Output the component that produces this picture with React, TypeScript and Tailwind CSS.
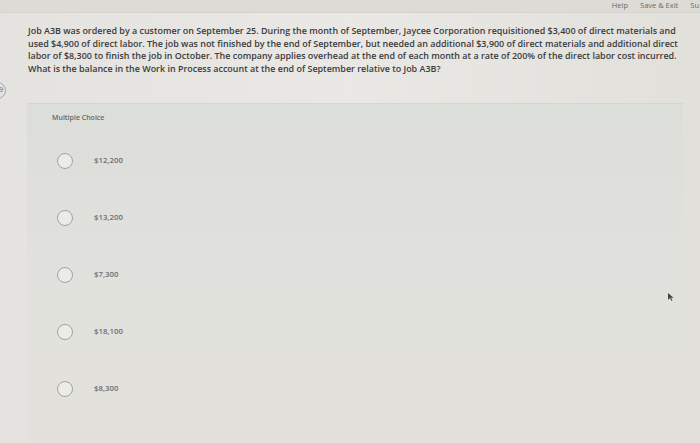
import React from "react";

const options = ["$12,200", "$13,200", "$7,300", "$18,100", "$8,300"];

const question = [
  "Job A3B was ordered by a customer on September 25. During the month of September, Jaycee Corporation requisitioned $3,400 of direct materials and",
  "used $4,900 of direct labor. The job was not finished by the end of September, but needed an additional $3,900 of direct materials and additional direct",
  "labor of $8,300 to finish the job in October. The company applies overhead at the end of each month at a rate of 200% of the direct labor cost incurred.",
  "What is the balance in the Work in Process account at the end of September relative to Job A3B?",
];

export default function App() {
  return (
    <div
      className="relative w-[700px] h-[443px] overflow-hidden bg-gradient-to-r from-[#e4e3df] via-[#e9e8e4] to-[#e2e0db] text-[#3b3b3b]"
      style={{ fontFamily: '"Open Sans", "Liberation Sans", sans-serif' }}
    >
      {/* top bar */}
      <div className="h-[13px] bg-[#dddbd6] border-b border-[#d4d2cd] flex items-start justify-end gap-[12px] pr-[1px] pt-[1px] text-[7.5px] leading-[9px] text-[#6a6a6a]">
        <span>Help</span>
        <span>Save &amp; Exit</span>
        <span>Su</span>
      </div>

      {/* question */}
      <div className="pl-[28px] pt-[12px] text-[8.95px] leading-[12.5px] font-semibold">
        {question.map((line) => (
          <div key={line} className="whitespace-nowrap">
            {line}
          </div>
        ))}
      </div>

      {/* question number badge, cut off at the left edge */}
      <div className="absolute left-[-11px] top-[82px] w-[17px] h-[17px] rounded-full border border-[#a9a7a2] flex items-center justify-end pr-[2px] text-[7px] text-[#666]">
        9
      </div>

      {/* answer panel */}
      <div className="ml-[27px] mt-[28px] w-[656px] h-[342px] bg-gradient-to-b from-[#dcdeda] via-[#e1e1dd] to-[#e3e1dc] border-t border-[#d5d6d2]">
        <div className="pl-[25px] pt-[9px] text-[7px] text-[#666] font-semibold">Multiple Choice</div>
        <div className="flex flex-col gap-[41px] pt-[29px] pl-[30px]">
          {options.map((o) => (
            <div key={o} className="flex items-center h-[16px]">
              <span className="w-[16px] h-[16px] rounded-full border border-[#a3a3a3] bg-[#ebebe8]" />
              <span className="ml-[21px] text-[7.8px] text-[#6f6f6f] font-semibold">{o}</span>
            </div>
          ))}
        </div>
      </div>

      {/* mouse cursor */}
      <svg className="absolute left-[668px] top-[293px]" width="6" height="8" viewBox="0 0 6 8">
        <path d="M0 0 L0 7 L2 5 L3.5 8 L4.5 7.5 L3 4.8 L5.5 4.8 Z" fill="#444" />
      </svg>
    </div>
  );
}
